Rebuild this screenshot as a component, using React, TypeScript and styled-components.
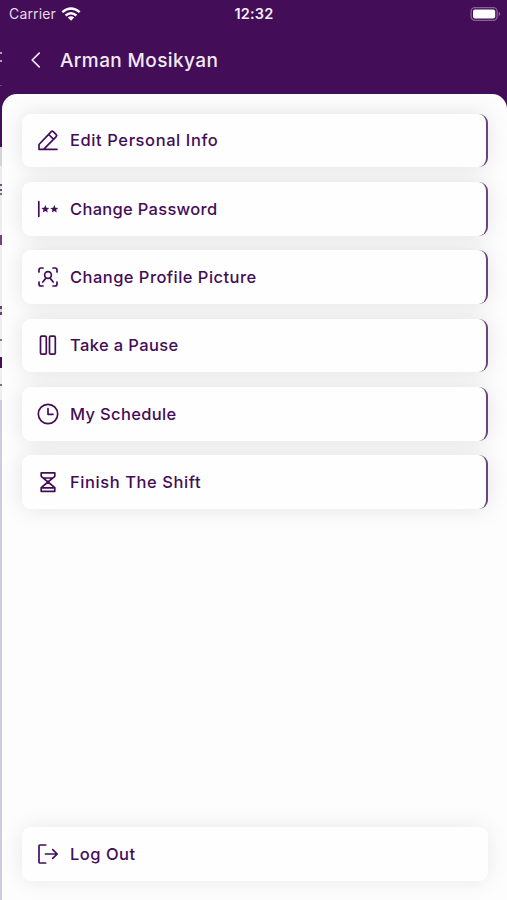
import React from "react";
import styled, { createGlobalStyle } from "styled-components";

const PURPLE = "#440d58";

const GlobalStyle = createGlobalStyle`
  * { box-sizing: border-box; }
  body { margin: 0; background: ${PURPLE}; }
`;

const Screen = styled.div`
  width: 507px;
  height: 900px;
  overflow: hidden;
  display: grid;
  grid-template-columns: 2px 505px;
  background: linear-gradient(${PURPLE} 147px, #fdfdfd 147px);
  font-family: "Inter", "Liberation Sans", sans-serif;
  color: ${PURPLE};
`;

const Underlay = styled.div`
  display: flex;
  flex-direction: column;
  overflow: hidden;
`;

const Slice = styled.div<{ $height: number; $color: string }>`
  flex: 0 0 ${(p) => p.$height}px;
  background: ${(p) => p.$color};
`;

const Main = styled.div`
  display: flex;
  flex-direction: column;
  height: 900px;
  min-width: 0;
`;

const StatusBar = styled.div`
  height: 28px;
  flex: none;
  display: grid;
  grid-template-columns: 1fr auto 1fr;
  align-items: center;
  padding: 0 6px 0 7px;
  color: #f4eef6;
`;

const Carrier = styled.div`
  display: flex;
  align-items: center;
  gap: 5px;
  font-size: 14px;
  letter-spacing: 0.15px;
  color: #e4d9e8;
  line-height: 16px;
`;

const Clock = styled.div`
  padding: 0 2px 2px 0;
  font-size: 14.5px;
  font-weight: 600;
  letter-spacing: 0.2px;
`;

const Battery = styled.svg`
  justify-self: end;
  margin-right: -1px;
`;

const Header = styled.header`
  height: 66px;
  flex: none;
  display: flex;
  align-items: center;
  padding: 0 0 2px 22px;
  gap: 12px;
  color: #f2e9f4;
`;

const Title = styled.h1<{ $spacing: number }>`
  margin: 0;
  font-size: 19px;
  font-weight: 500;
  letter-spacing: ${(p) => p.$spacing}px;
  white-space: nowrap;
`;

const Panel = styled.main`
  flex: 1;
  min-height: 0;
  display: flex;
  flex-direction: column;
  justify-content: space-between;
  padding: 19.5px 19px 19.3px 20px;
  background: #fdfdfd;
  border-radius: 15px 15px 0 0;
  isolation: isolate;
  overflow: hidden;
`;

const Menu = styled.nav`
  display: flex;
  flex-direction: column;
  gap: 14.7px;
`;

const Card = styled.button<{ $accent?: boolean }>`
  position: relative;
  width: 466px;
  height: 53.7px;
  display: flex;
  align-items: center;
  gap: 10px;
  padding: 0 0 0 14px;
  border: 0 solid #6a437b;
  border-right-width: ${(p) => (p.$accent ? "2px" : "0")};
  border-radius: 9px;
  background: #fefefe;
  color: ${PURPLE};
  font: inherit;
  text-align: left;

  &::before {
    content: "";
    position: absolute;
    inset: 0 ${(p) => (p.$accent ? "-2px" : "0")} 0 0;
    z-index: -1;
    border-radius: 9px;
    box-shadow: 0 0 22px rgba(0, 0, 0, ${(p) => (p.$accent ? 0.105 : 0.085)});
  }
`;

const Label = styled.span<{ $spacing: number }>`
  font-size: 16.5px;
  font-weight: 500;
  line-height: 24px;
  letter-spacing: ${(p) => p.$spacing}px;
  white-space: nowrap;
`;

const Icon = styled.svg`
  width: 24px;
  height: 24px;
  flex: none;
  fill: none;
  stroke: currentColor;
  stroke-width: 1.7;
  stroke-linecap: round;
  stroke-linejoin: round;
`;

const star = (x: number) =>
  `M${x} 8.1l1.1 2.6 2.9.2-2.2 1.8.7 2.9-2.5-1.5-2.5 1.5.7-2.9-2.2-1.8 2.9-.2z`;

const icons: Record<string, React.ReactNode> = {
  edit: (
    <path d="M3 21.3h18M3 21.3v-4.8L15.2 3.6q1-1 2 0l3 3q1 1 0 2L7.8 21.2M12.7 6.5l5 4.8" />
  ),
  password: (
    <>
      <path d="M2.8 4.7v14.6" />
      <path d={star(9.3) + star(18.3)} fill="currentColor" stroke="none" />
    </>
  ),
  profile: (
    <>
      <path d="M3 7V5q0-2 2-2h2M17 3h2q2 0 2 2v2M21 17v2q0 2-2 2h-2M7 21H5q-2 0-2-2v-2" />
      <circle cx="12" cy="10" r="3.4" />
      <path d="M6.8 17l3.1-3.9M17.2 17l-3.1-3.9" />
    </>
  ),
  pause: (
    <>
      <rect x="4.5" y="3.2" width="5.8" height="18" rx="1.2" />
      <rect x="13.5" y="3.2" width="5.8" height="18" rx="1.2" />
    </>
  ),
  clock: (
    <>
      <circle cx="12" cy="12" r="9.7" />
      <path d="M12 6.5v5.8h5" />
    </>
  ),
  hourglass: (
    <path d="M5.2 2.9h13.6v3.4L12 12l6.8 5.7v3.6H5.2v-3.6L12 12 5.2 6.3zM7.6 8h8.8M5.5 17.8h13" />
  ),
  logout: (
    <path d="M9.7 3H4q-1 0-1 1v16q0 1 1 1h5.7M9.5 12h11.7M16.7 7.6l4.5 4.4-4.5 4.4" />
  ),
};

const items = [
  { icon: "edit", label: "Edit Personal Info", spacing: 0.59 },
  { icon: "password", label: "Change Password", spacing: 0.3 },
  { icon: "profile", label: "Change Profile Picture", spacing: 0.46 },
  { icon: "pause", label: "Take a Pause", spacing: 0.38 },
  { icon: "clock", label: "My Schedule", spacing: 0.33 },
  { icon: "hourglass", label: "Finish The Shift", spacing: 0.58 },
];

const slices: [number, string][] = [
  [52, PURPLE], [1.5, "#b79fc1"], [6.5, PURPLE], [1.5, "#b79fc1"],
  [23.5, PURPLE], [1, "#6c427c"], [61, PURPLE],
  [19, "#d5d3d7"], [18, "#ececee"], [2, "#76517f"], [3, "#e8e4ea"],
  [2, "#76517f"], [2, "#e8e4ea"], [2, "#777177"], [40, "#ececee"],
  [10, "#71447d"], [61, "#eeeeef"], [3, "#684075"], [3, "#d9d0dc"],
  [3, "#684075"], [24, "#eeeeef"], [1.5, "#777"], [16.5, "#eeeeef"],
  [11, PURPLE], [16, "#eeeeef"], [1.5, "#777"], [14.5, "#eeeeef"],
  [500, "#cfcbdf"],
];

export default function App() {
  return (
    <>
      <GlobalStyle />
      <Screen>
        <Underlay>
          {slices.map(([height, color], i) => (
            <Slice key={i} $height={height} $color={color} />
          ))}
        </Underlay>
        <Main>
          <StatusBar>
            <Carrier>
              Carrier
              <svg width="20" height="14" viewBox="0 0 20 14" fill="none" stroke="#fff" strokeWidth="2.4">
                <path d="M1.3 5.2q8.7-7.5 17.4 0M4.6 8.5q5.4-4.4 10.8 0" />
                <path d="M6.8 10.6q3.2-2.5 6.4 0L10 13.8z" fill="#fff" stroke="none" />
              </svg>
            </Carrier>
            <Clock>12:32</Clock>
            <Battery width="32" height="14" viewBox="0 0 32 14">
              <rect x="1.1" y=".6" width="26" height="12.8" rx="3.8" fill="none" stroke="#87629a" strokeWidth="1.3" />
              <rect x="3" y="2.5" width="22.2" height="9" rx="2" fill="#fff" />
              <path d="M28.7 4.8q3.2 2.2 0 4.4z" fill="#87629a" />
            </Battery>
          </StatusBar>
          <Header>
            <Icon viewBox="0 0 24 24">
              <path d="M15.2 5.2L8.2 12l7 6.8" />
            </Icon>
            <Title $spacing={0.4}>Arman Mosikyan</Title>
          </Header>
          <Panel>
            <Menu>
              {items.map((item) => (
                <Card key={item.icon} $accent>
                  <Icon viewBox="0 0 24 24">{icons[item.icon]}</Icon>
                  <Label $spacing={item.spacing}>{item.label}</Label>
                </Card>
              ))}
            </Menu>
            <Card>
              <Icon viewBox="0 0 24 24">{icons.logout}</Icon>
              <Label $spacing={0.5}>Log Out</Label>
            </Card>
          </Panel>
        </Main>
      </Screen>
    </>
  );
}
